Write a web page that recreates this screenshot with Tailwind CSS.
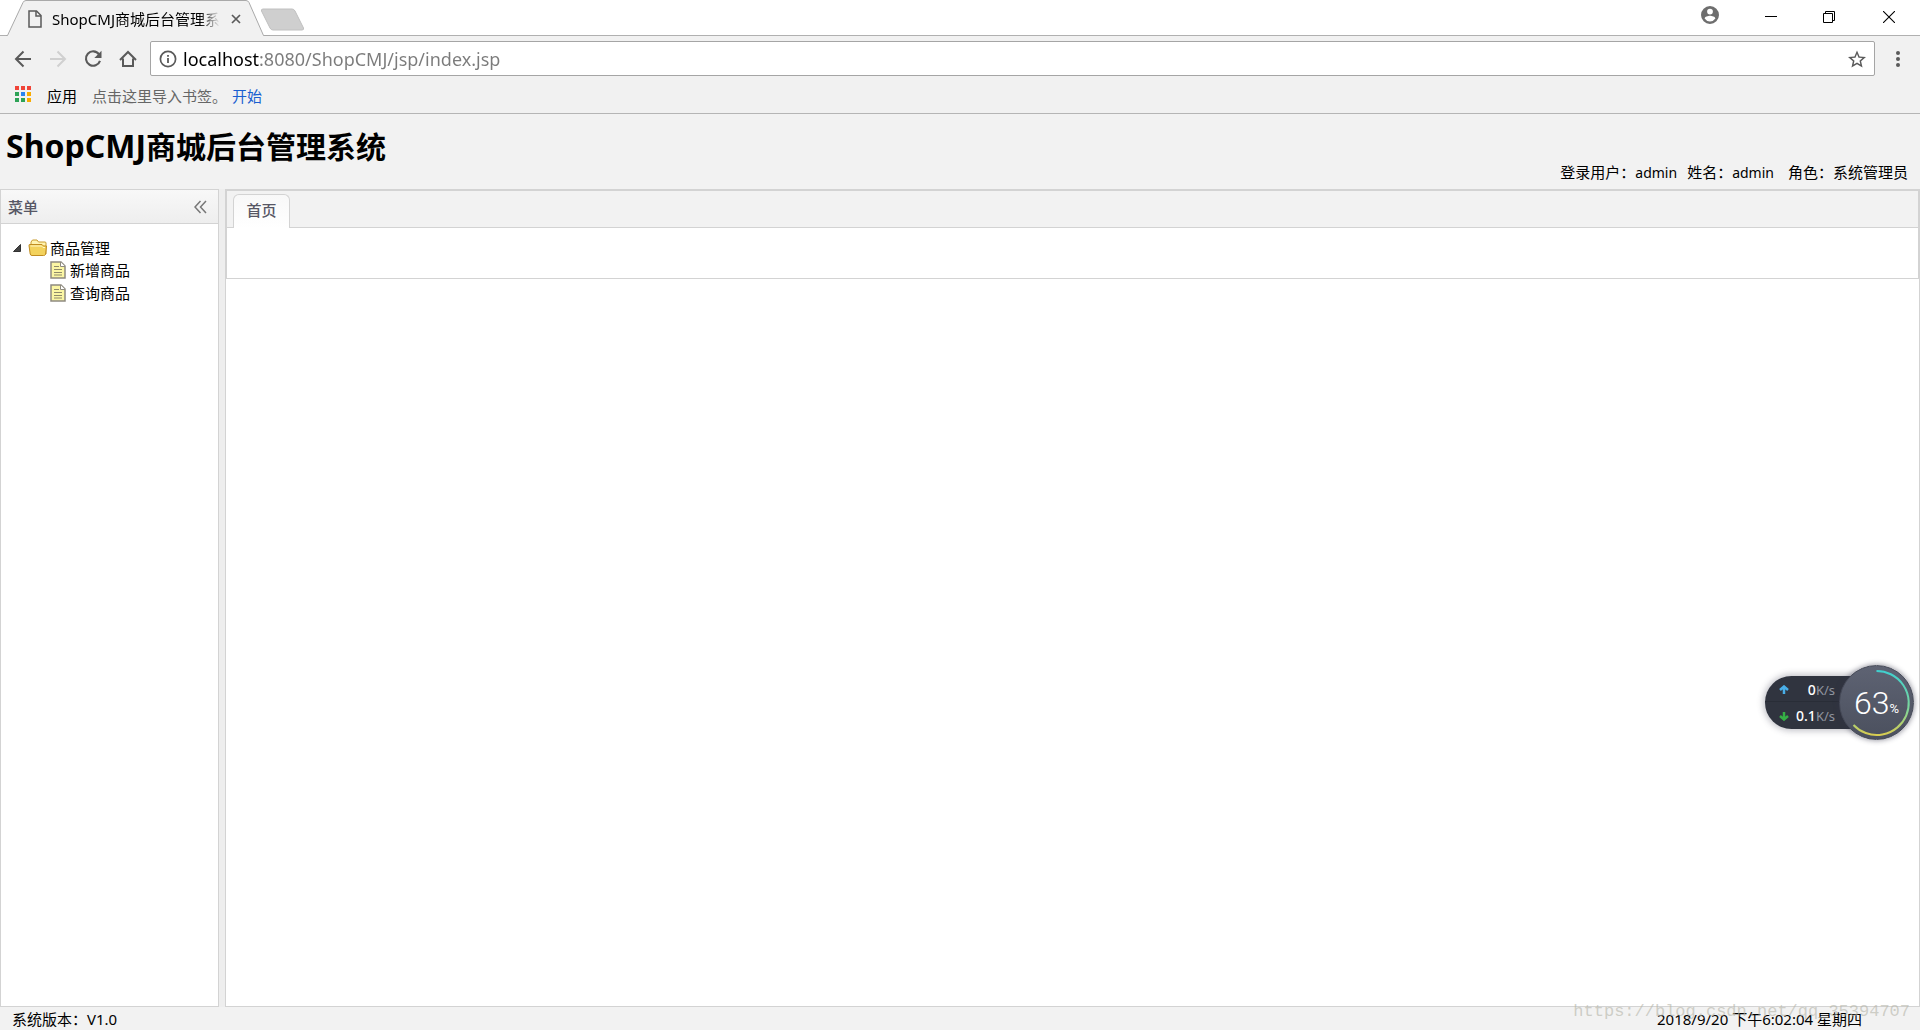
<!DOCTYPE html>
<html lang="zh-CN">
<head>
    <meta charset="UTF-8">
    <meta name="viewport" content="width=device-width, initial-scale=1.0">
    <title>ShopCMJ商城后台管理系统</title>
    <script src="https://cdn.jsdelivr.net/npm/@tailwindcss/browser@4"></script>
    <style>
        body, input, button { font-family: 'Noto Sans', 'Noto Sans CJK SC', sans-serif; }
    </style>
</head>
<body class="h-screen flex flex-col overflow-hidden bg-[#f2f2f2] text-[15px] leading-5 text-black">

    <!-- Window title bar -->
    <div class="relative h-9 shrink-0 flex items-start bg-white border-b border-[#b0b0b0]">
        <div class="relative z-10 w-[264px] h-9 ml-[6px] shrink-0">
            <svg class="absolute inset-0" width="264" height="36" viewBox="0 0 264 36">
                <path d="M0 35.500H1.500L17 2.500Q18 .5 20 .5H240Q242 .5 243 2.500L257.500 35.500H264V36H0z" fill="#f1f1f1"/>
                <path d="M0 35.500H1.500L17 2.500Q18 .5 20 .5H240Q242 .5 243 2.500L257.500 35.500H264" fill="none" stroke="#a9a9a9"/>
            </svg>
            <div class="relative flex items-center h-9 pt-px pl-[22px]">
                <svg class="shrink-0" width="14" height="18" viewBox="0 0 14 18" fill="none" stroke="#5a5a5a" stroke-width="1.500">
                    <path d="M1 1H8.500L13 5.500V17H1z"/><path d="M8 1V6H13"/>
                </svg>
                <span class="ml-[10px] w-[168px] overflow-hidden whitespace-nowrap [mask-image:linear-gradient(to_right,#000_88%,transparent)]">ShopCMJ商城后台管理系统</span>
                <button class="ml-[11px]" aria-label="关闭标签页">
                    <svg width="10" height="10" viewBox="0 0 10 10" stroke="#5a5a5a" stroke-width="1.700"><path d="M1 1L9 9M9 1L1 9"/></svg>
                </button>
            </div>
        </div>
        <button class="-ml-[10px] mt-2" aria-label="新标签页">
            <svg width="45" height="23" viewBox="0 0 45 23"><path d="M3 1H32Q34 1 35 3L43.500 20Q44 22 42 22H13Q11 22 10 20L1.500 3Q1 1 3 1z" fill="#cfcfcf" stroke="#c0c0c0"/></svg>
        </button>
        <div class="ml-auto flex">
            <button class="h-[30px] w-[60px] flex items-center justify-center" aria-label="用户">
                <svg width="18" height="18" viewBox="2 2 20 20" fill="#6e6e6e"><path d="M12 2a10 10 0 1 0 0 20a10 10 0 0 0 0-20zm0 3a3.200 3.200 0 1 1 0 6.400A3.200 3.200 0 0 1 12 5zm0 14.200a7.200 7.200 0 0 1-6-3.220c.03-1.990 4-3.080 6-3.080s5.970 1.090 6 3.080a7.200 7.200 0 0 1-6 3.220z"/></svg>
            </button>
            <button class="ml-[2px] h-[34px] w-[58px] flex items-center justify-center" aria-label="最小化">
                <svg width="12" height="12" viewBox="0 0 12 12"><path d="M0 5.500H12" stroke="#000"/></svg>
            </button>
            <button class="h-[34px] w-[58px] flex items-center justify-center" aria-label="还原">
                <svg width="12" height="12" viewBox="0 0 12 12" fill="none" stroke="#000"><path d="M.5 2.500H9.500V11.500H.5z"/><path d="M2.500 2.500V.5H11.500V9.500H9.500"/></svg>
            </button>
            <button class="h-[34px] w-[62px] flex items-center justify-center" aria-label="关闭">
                <svg width="12" height="12" viewBox="0 0 12 12" stroke="#000" stroke-width="1.100"><path d="M0 0L12 12M12 0L0 12"/></svg>
            </button>
        </div>
    </div>

    <!-- Toolbar -->
    <div class="h-[44px] shrink-0 flex items-center pl-[14px] pr-5 pt-px bg-[#f1f1f1]">
        <button aria-label="后退">
            <svg width="18" height="18" viewBox="0 0 18 18" fill="none" stroke="#5a5a5a" stroke-width="2"><path d="M17 9H2M9.500 1.500L2 9L9.500 16.500"/></svg>
        </button>
        <button class="ml-[17px]" aria-label="前进">
            <svg width="18" height="18" viewBox="0 0 18 18" fill="none" stroke="#d0d0d0" stroke-width="2"><path d="M1 9H16M8.500 1.500L16 9L8.500 16.500"/></svg>
        </button>
        <button class="ml-[17px]" aria-label="刷新">
            <svg width="18" height="18" viewBox="0 0 18 18"><path d="M15 4.300A7.200 7.200 0 1 0 16 10.800" fill="none" stroke="#5a5a5a" stroke-width="2.100"/><path d="M17.500 .8V8H10.300z" fill="#5a5a5a"/></svg>
        </button>
        <button class="ml-[17px]" aria-label="主页">
            <svg width="18" height="18" viewBox="0 0 18 18" fill="none" stroke="#5a5a5a" stroke-width="2"><path d="M1 10L9 2L17 10M4 8.500V16H14V8.500"/></svg>
        </button>
        <div class="ml-[13px] flex-1 h-[35px] flex items-center pl-[8px] pr-2 bg-white border border-[#a5a5a5] rounded-xs">
            <svg class="shrink-0" width="18" height="18" viewBox="0 0 18 18" fill="none" stroke="#5a5a5a"><circle cx="9" cy="9" r="7.600" stroke-width="1.700"/><path d="M9 8V13M9 5V6.700" stroke-width="1.800"/></svg>
            <input type="text" aria-label="地址" value="localhost:8080/ShopCMJ/jsp/index.jsp"
                   class="ml-[6px] h-7 flex-1 text-lg leading-7 outline-none text-transparent bg-clip-text bg-[linear-gradient(to_right,#000_76px,#7b7b7b_76px)]">
            <button aria-label="收藏">
                <svg width="18" height="18" viewBox="0 0 24 24" fill="#5a5a5a"><path d="M24 9.300l-8.600-.75L12 .6 8.600 8.550 0 9.300l6.500 5.650L4.600 23.400 12 18.900l7.400 4.500-1.950-8.450L24 9.300zM12 16.600l-4.500 2.750 1.200-5.150-4-3.450 5.250-.45L12 5.450l2.050 4.850 5.250.45-4 3.450 1.200 5.150L12 16.600z"/></svg>
            </button>
        </div>
        <button class="ml-[21px]" aria-label="菜单">
            <svg width="4" height="18" viewBox="0 0 4 18" fill="#5a5a5a"><circle cx="2" cy="3" r="2"/><circle cx="2" cy="9" r="2"/><circle cx="2" cy="15" r="2"/></svg>
        </button>
    </div>

    <!-- Bookmarks bar -->
    <div class="h-[34px] shrink-0 flex items-center pb-px pl-[15px] bg-[#f1f1f1] border-b border-[#b5b5b5]">
        <svg class="mb-1" width="16" height="16" viewBox="0 0 16 16">
            <path d="M0 0h4v4H0zM6 0h4v4H6zM12 0h4v4h-4z" fill="#f04438"/>
            <path d="M0 6h4v4H0zM0 12h4v4H0zM6 12h4v4H6z" fill="#2ea357"/>
            <path d="M6 6h4v4H6z" fill="#2a84f0"/>
            <path d="M12 6h4v4h-4zM12 12h4v4h-4z" fill="#f9ab00"/>
        </svg>
        <button class="ml-4">应用</button>
        <span class="ml-[15px] text-[#666]">点击这里导入书签。</span>
        <a href="#" class="ml-[5px] text-[#1a5fd0]">开始</a>
    </div>

    <!-- App header -->
    <header class="h-[75px] shrink-0 flex justify-between pl-[6px] pr-3">
        <h1 class="pt-3 text-[30px] leading-10 font-bold"><span class="text-[32px]">ShopCMJ</span>商城后台管理系统</h1>
        <div class="flex self-end pb-[6px]">
            <span>登录用户：<span class="text-sm leading-5">admin</span></span>
            <span class="ml-[10px]">姓名：<span class="text-sm leading-5">admin</span></span>
            <span class="ml-[14px]">角色：系统管理员</span>
        </div>
    </header>

    <main class="flex-1 min-h-0 flex gap-[6px] bg-[#eee]">
        <aside class="w-[219px] shrink-0 bg-white border border-[#d3d3d3]">
            <div class="h-[34px] flex items-center justify-between pl-[7px] pr-[11px] border-b border-[#d3d3d3] bg-linear-to-b from-[#f8f8f8] to-[#eee]">
                <h2 class="font-medium text-[#575765]">菜单</h2>
                <button aria-label="折叠">
                    <svg width="13" height="14" viewBox="0 0 13 14" fill="none" stroke="#777" stroke-width="1.500"><path d="M6.500 1L1 7L6.500 13M12 1L6.500 7L12 13"/></svg>
                </button>
            </div>
            <ul class="pt-[13px] pl-3">
                <li>
                    <div class="flex items-center h-[21px]">
                        <svg width="8" height="8" viewBox="0 0 8 8"><path d="M7.500 .5V7.500H.5z" fill="#444" stroke="#333" stroke-linejoin="round"/></svg>
                        <svg class="ml-[7px]" width="20" height="17" viewBox="0 0 20 17">
                            <path d="M3 15V3L4.500 1H9L10.500 3H17Q18 3 18 4V15z" fill="#fff3b0" stroke="#c89a2c"/>
                            <path d="M1 6.500Q.7 5.500 2 5.500H14L15.500 7H18.500L17.500 15.500Q17 16.500 15.500 16.500H4Q2.500 16.500 2.200 15z" fill="#f3d25c" stroke="#c08c20"/>
                            <path d="M2.500 7H13.500L15 8.500H17" fill="none" stroke="#fff6c4"/>
                        </svg>
                        <span class="ml-[2px]">商品管理</span>
                    </div>
                    <ul class="pl-[37px]">
                        <li class="flex items-center h-[23px]">
                            <svg width="16" height="18" viewBox="0 0 16 18"><path d="M1 1H11L15 5V17H1z" fill="#fbf6a4" stroke="#8e8a80" stroke-width="1.500"/><path d="M10.500 1V5.500H15" fill="#fff" stroke="#8e8a80"/><path d="M4 5.500H9M4 8.500H12M4 11.500H12M4 14H12" stroke="#8e8a6a"/></svg>
                            <a href="#" class="ml-1">新增商品</a>
                        </li>
                        <li class="flex items-center h-[23px]">
                            <svg width="16" height="18" viewBox="0 0 16 18"><path d="M1 1H11L15 5V17H1z" fill="#fbf6a4" stroke="#8e8a80" stroke-width="1.500"/><path d="M10.500 1V5.500H15" fill="#fff" stroke="#8e8a80"/><path d="M4 5.500H9M4 8.500H12M4 11.500H12M4 14H12" stroke="#8e8a6a"/></svg>
                            <a href="#" class="ml-1">查询商品</a>
                        </li>
                    </ul>
                </li>
            </ul>
        </aside>

        <section class="flex-1 bg-white border border-[#d3d3d3]">
            <div class="h-[89px] flex flex-col border border-[#d3d3d3]">
                <div class="h-[37px] shrink-0 flex items-end pl-[6px] border-b border-[#d3d3d3] bg-[#f2f2f2]">
                    <button class="-mb-px h-[34px] w-[57px] pb-1 rounded-t-md border border-b-0 border-[#d3d3d3] bg-linear-to-b from-[#f8f8f8] to-white font-medium text-[#575765]">首页</button>
                </div>
            </div>
        </section>
    </main>

    <footer class="h-[23px] shrink-0 flex items-center justify-between pl-3 pr-[58px]">
        <span>系统版本：V1.0</span>
        <span>2018/9/20 下午6:02:04 星期四</span>
    </footer>

    <div class="absolute right-[10px] bottom-2 font-['Liberation_Mono'] text-[17px] leading-5 text-[#b4b4a8]/60 pointer-events-none">https://blog.csdn.net/qq_35394707</div>

    <!-- Floating network monitor -->
    <div class="absolute right-[6px] top-[665px] w-[149px] h-[75px] flex items-center">
        <div class="w-[100px] h-[53px] rounded-l-full bg-[#30343f] shadow-[0_0_6px_2px_rgba(60,60,80,0.3)] text-sm leading-[26px]">
            <div class="h-[26px] flex items-center pt-[2px] pl-[14px] pr-[30px] border-b border-[#292d37]">
                <svg width="10" height="9" viewBox="0 0 10 9" fill="none" stroke="#49aee8" stroke-width="2.500"><path d="M1 5L5 1.500L9 5M5 2V9"/></svg>
                <span class="ml-auto font-medium text-white">0</span><span class="text-[13px] leading-[26px] text-[#9095a0]">K/s</span>
            </div>
            <div class="h-[26px] flex items-center pt-[2px] pl-[14px] pr-[30px]">
                <svg width="10" height="9" viewBox="0 0 10 9" fill="none" stroke="#35b045" stroke-width="2.500"><path d="M1 4L5 7.500L9 4M5 0V7"/></svg>
                <span class="ml-auto font-medium text-white">0.1</span><span class="text-[13px] leading-[26px] text-[#9095a0]">K/s</span>
            </div>
        </div>
        <div class="absolute right-0 top-0 size-[75px] rounded-full bg-linear-to-b from-[#5e6373] to-[#4b505e] border border-[#454957] shadow-[0_0_5px_1px_rgba(50,50,70,0.45)] flex items-center justify-center text-white">
            <svg class="absolute -inset-px" width="75" height="75" viewBox="0 0 75 75" fill="none" stroke-width="2">
                <defs>
                    <linearGradient id="ring" x1="0" y1="0" x2="0" y2="1">
                        <stop offset="0" stop-color="#3fd0cf"/>
                        <stop offset="0.600" stop-color="#7fd69a"/>
                        <stop offset="1" stop-color="#d8cc50"/>
                    </linearGradient>
                </defs>
                <path d="M37.500 6A32 32 0 1 1 14.500 60" stroke="url(#ring)"/>
            </svg>
            <span class="font-[Roboto] font-light text-[32px] leading-10">63</span><span class="pt-3 font-[Roboto] text-[13px]">%</span>
        </div>
    </div>
</body>
</html>
